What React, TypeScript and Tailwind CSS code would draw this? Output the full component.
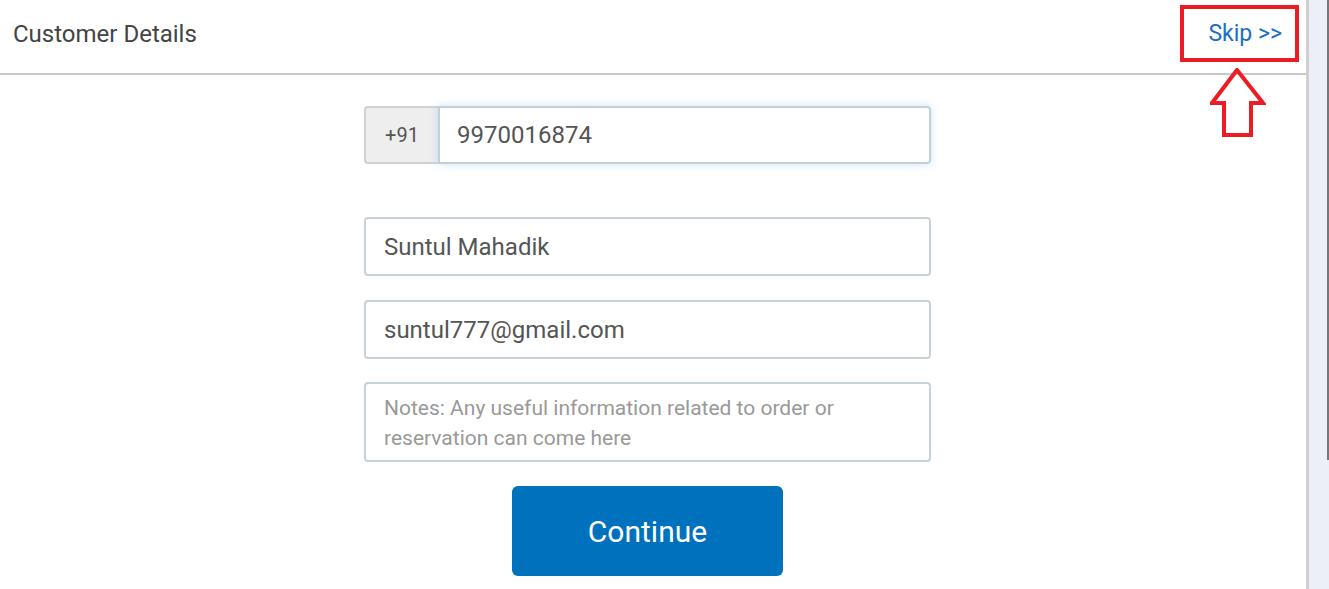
import React from "react";

export default function App() {
  const font = { fontFamily: "Roboto, 'Liberation Sans', sans-serif" };
  return (
    <div className="flex h-[589px] w-[1329px] overflow-hidden bg-[#eceff8]" style={font}>
      <div className="flex h-full w-[1309px] flex-col border-r-[3px] border-[#cfcfcf] bg-white">
        <div className="relative flex h-[75px] shrink-0 items-center justify-between border-b-2 border-[#c8c8c8] pl-[13px] pr-[24px]">
          <span className="pb-[5px] text-[24px] text-[#444]">Customer Details</span>
          <span className="pb-[5px] text-[23px] text-[#1b6ec2]">Skip &gt;&gt;</span>
          <div className="absolute left-[1180px] top-[5px] h-[57px] w-[119px] border-4 border-[#ed1c24]" />
          <svg className="absolute left-[1210px] top-[68px]" width="56" height="70" viewBox="0 0 56 70">
            <path d="M27 2 L53 35 L41 35 L41 67 L14 67 L14 35 L2 35 Z" fill="none" stroke="#ed1c24" strokeWidth="4" strokeLinejoin="miter" />
          </svg>
        </div>
        <div className="flex flex-col pl-[364px] pt-[31px]">
          <div className="flex h-[58px] w-[567px]">
            <div className="flex w-[74px] items-center justify-center rounded-l-[4px] border-2 border-r-0 border-[#cfd3d6] bg-[#eeeeee] text-[20px] text-[#555]">
              +91
            </div>
            <div className="flex flex-1 items-center rounded-r-[4px] border-2 border-[#c2d0dc] pl-[17px] text-[24px] text-[#555] shadow-[0_0_8px_rgba(102,175,233,0.35)]">
              9970016874
            </div>
          </div>
          <div className="mt-[53px] flex h-[59px] w-[567px] items-center rounded-[4px] border-2 border-[#c8d0d8] pl-[18px] text-[24px] text-[#555]">
            Suntul Mahadik
          </div>
          <div className="mt-[24px] flex h-[59px] w-[567px] items-center rounded-[4px] border-2 border-[#c8d0d8] pl-[18px] text-[24px] text-[#555]">
            suntul777@gmail.com
          </div>
          <div className="mt-[23px] h-[80px] w-[567px] rounded-[4px] border-2 border-[#c8d0d8] pl-[18px] pt-[9px] text-[21px] leading-[30px] text-[#999]">
            Notes: Any useful information related to order or
            <br />
            reservation can come here
          </div>
          <div className="mt-[24px] flex w-[567px] justify-center">
            <button className="h-[90px] w-[271px] rounded-[6px] bg-[#0071bc] text-[30px] text-white">
              Continue
            </button>
          </div>
        </div>
      </div>
      <div className="flex flex-1 justify-end">
        <div className="h-[460px] w-[2px] bg-[#777]" />
      </div>
    </div>
  );
}
